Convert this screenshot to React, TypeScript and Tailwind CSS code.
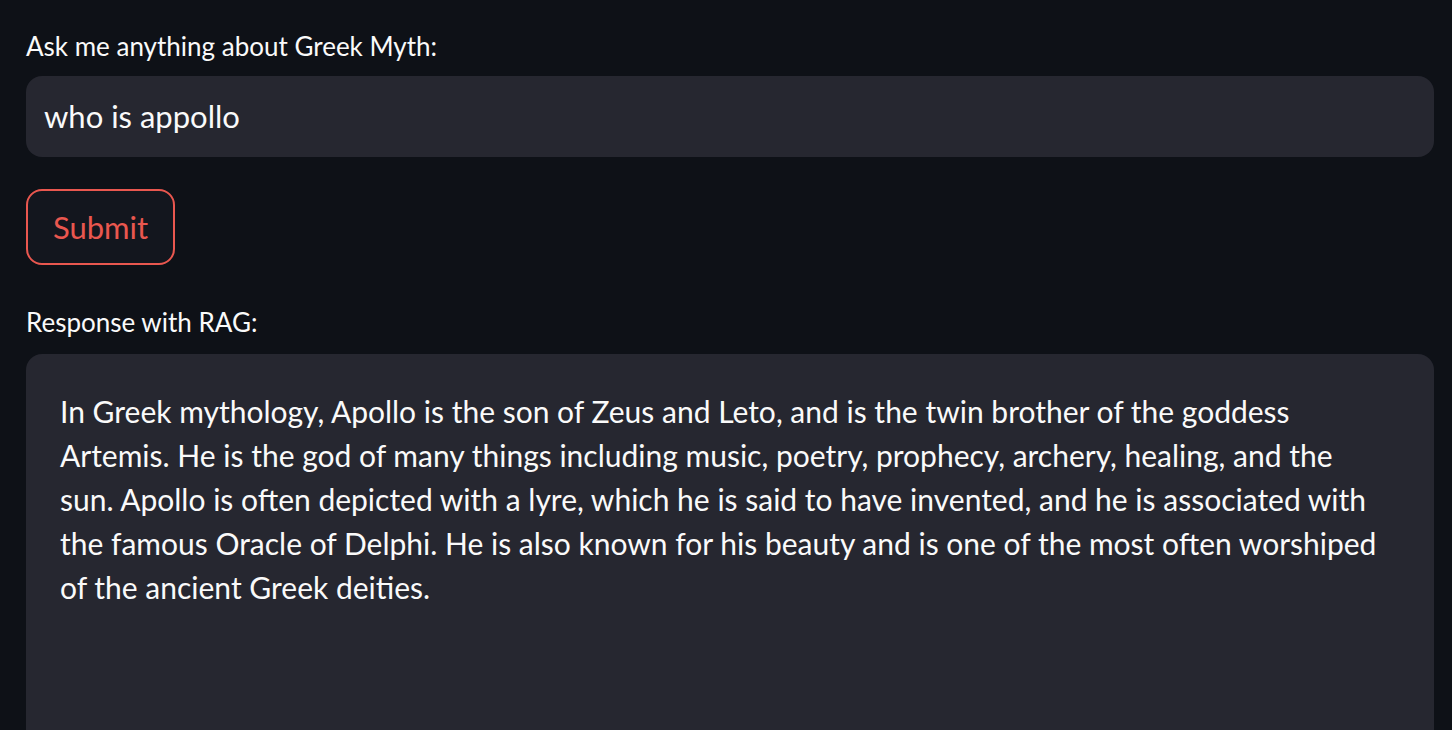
import React from "react";

const answer = [
  "In Greek mythology, Apollo is the son of Zeus and Leto, and is the twin brother of the goddess",
  "Artemis. He is the god of many things including music, poetry, prophecy, archery, healing, and the",
  "sun. Apollo is often depicted with a lyre, which he is said to have invented, and he is associated with",
  "the famous Oracle of Delphi. He is also known for his beauty and is one of the most often worshiped",
  "of the ancient Greek deities.",
];

const font = { fontFamily: "Lato, 'Open Sans', sans-serif" };

export default function App() {
  return (
    <div
      className="h-screen w-full overflow-hidden bg-[#0e1117] text-[#fafafa] px-[26px] pt-[30px]"
      style={font}
    >
      <div className="w-[1408px] flex flex-col">
        <label className="text-[26px] leading-[32px] mb-[14px]">
          Ask me anything about Greek Myth:
        </label>
        <div className="h-[81px] rounded-[16px] bg-[#262730] flex items-center px-[18px]">
          <span className="text-[31px]">who is appollo</span>
        </div>

        <div className="mt-[32px]">
          <button className="h-[76px] w-[149px] rounded-[16px] border-2 border-[#e9574f] bg-[#13161e] text-[#e9574f] text-[31px] flex items-center justify-center">
            Submit
          </button>
        </div>

        <label className="mt-[41px] mb-[16px] text-[26px] leading-[32px]">
          Response with RAG:
        </label>
        <div className="h-[420px] rounded-[16px] bg-[#262730] pt-[35px] pl-[34px]">
          {answer.map((line) => (
            <div key={line} className="whitespace-nowrap text-[30px] leading-[44px]">
              {line}
            </div>
          ))}
        </div>
      </div>
    </div>
  );
}
